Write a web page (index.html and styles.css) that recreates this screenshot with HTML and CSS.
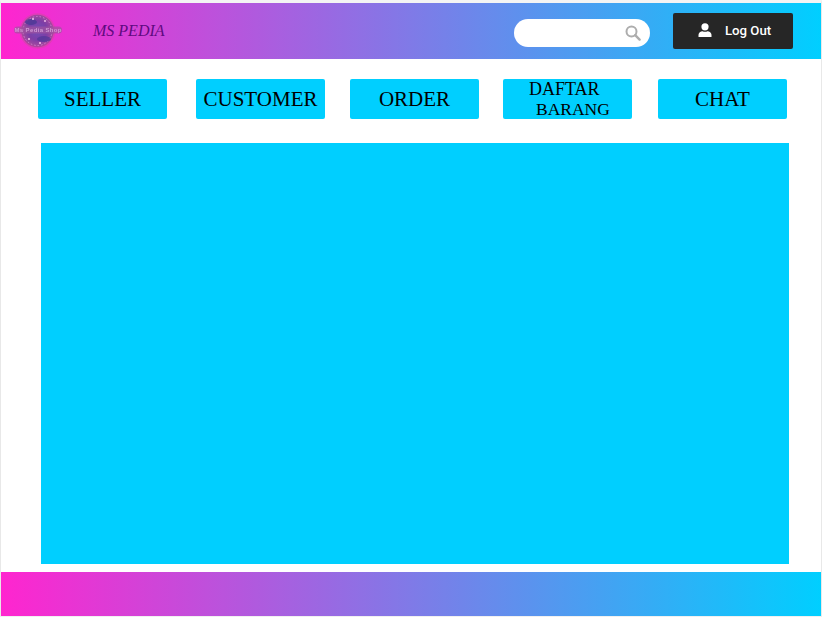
FILE: index.html
```html
<!DOCTYPE html>
<html lang="id">
<head>
<meta charset="utf-8">
<title>MS Pedia</title>
<link rel="stylesheet" href="styles.css">
</head>
<body>
<div class="page">
  <header class="topbar">
    <div class="brand">
      <svg class="logo" width="50" height="40" viewBox="0 0 50 40" aria-hidden="true">
        <defs>
          <radialGradient id="orb" cx="50%" cy="48%" r="52%">
            <stop offset="0" stop-color="#6f4fb8"/>
            <stop offset="0.55" stop-color="#7d3ea6"/>
            <stop offset="0.85" stop-color="#a0489f"/>
            <stop offset="1" stop-color="#c2409f"/>
          </radialGradient>
        </defs>
        <circle cx="24.500" cy="20" r="17" fill="url(#orb)" stroke="#e03cb8" stroke-width="1.500"/>
        <circle cx="24.500" cy="20" r="14.500" fill="none" stroke="#d98ad8" stroke-width="0.800" stroke-dasharray="1.500 2"/>
        <ellipse cx="18" cy="11" rx="6" ry="3" fill="#4a3a96" opacity="0.8"/>
        <ellipse cx="31" cy="28" rx="7" ry="3" fill="#54389a" opacity="0.8"/>
        <circle cx="20" cy="8" r="1" fill="#f6c4ec"/>
        <circle cx="32" cy="10" r="0.900" fill="#f6c4ec"/>
        <circle cx="16" cy="28" r="1" fill="#f6c4ec"/>
        <circle cx="27" cy="32" r="1" fill="#f6c4ec"/>
        <rect x="1" y="15.500" width="48" height="7" rx="3.500" fill="#a0529f" opacity="0.7"/>
        <text class="logo-text" x="25" y="21.200" text-anchor="middle" textLength="47">Ms Pedia Shop</text>
      </svg>
      <span class="brand-name">MS PEDIA</span>
    </div>
    <div class="actions">
      <div class="search">
        <svg width="16" height="16" viewBox="0 0 16 16" aria-hidden="true">
          <circle cx="6.500" cy="6.500" r="5" fill="none" stroke="#adadad" stroke-width="2"/>
          <path d="M10.200 10.200 14.600 14.600" stroke="#adadad" stroke-width="2.400" stroke-linecap="round"/>
        </svg>
      </div>
      <button class="logout" type="button">
        <svg class="user-icon" width="14" height="14" viewBox="0 0 14 14" aria-hidden="true">
          <circle cx="7" cy="3.800" r="3.600" fill="#fff"/>
          <path d="M.5 14v-2.200C.5 9.600 2.600 8.400 4.500 8.200c1.500.8 3.500.8 5 0 1.900.2 4 1.400 4 3.600V14z" fill="#fff"/>
        </svg>
        <span class="logout-label">Log Out</span>
      </button>
    </div>
  </header>

  <nav class="menu">
    <a class="tab">SELLER</a>
    <a class="tab tab-b">CUSTOMER</a>
    <a class="tab tab-c">ORDER</a>
    <a class="tab tab-d tab-small"><span class="line-one">DAFTAR</span><span class="line-two">BARANG</span></a>
    <a class="tab tab-e">CHAT</a>
  </nav>

  <main class="panel"></main>

  <footer class="bottombar"></footer>
</div>
</body>
</html>
```
FILE: styles.css
```css
* {
  box-sizing: border-box;
}

html,
body {
  margin: 0;
  height: 100%;
  background: #fff;
}

.page {
  width: 822px;
  height: 617px;
  display: flex;
  flex-direction: column;
  background: #fff;
  border-style: solid;
  border-color: #f4f4f4 #e8e8e8 #f0f0f0;
  border-width: 3px 1px 1px;
}

.topbar {
  height: 56px;
  flex: none;
  display: flex;
  align-items: center;
  justify-content: space-between;
  padding-right: 28px;
  background: linear-gradient(90deg, #ff25cf 0%, #00cfff 100%);
}

.brand {
  display: flex;
  align-items: center;
  padding-left: 12px;
}

.logo {
  display: block;
  filter: blur(0.5px);
}

.logo-text {
  font: 700 6px "Liberation Sans", sans-serif;
  fill: #cf9ad2;
}

.brand-name {
  margin-left: 30px;
  font: italic 16px "Liberation Serif", serif;
  color: #5f0a80;
}

.actions {
  display: flex;
  align-items: center;
  gap: 23px;
}

.search {
  width: 136px;
  height: 28px;
  padding-right: 9px;
  margin-top: 4px;
  display: flex;
  align-items: center;
  justify-content: flex-end;
  background: #fff;
  border-radius: 14px;
}

.logout {
  width: 120px;
  height: 36px;
  padding: 0 0 2px 25px;
  display: flex;
  align-items: center;
  gap: 13px;
  border: 0;
  border-radius: 2px;
  background: #262626;
  color: #fff;
  font: 500 13.2px Roboto, sans-serif;
}

.user-icon {
  margin-bottom: 1px;
}

.menu {
  display: flex;
  height: 84px;
  flex: none;
  padding: 20px 0 0 37px;
}

.tab {
  width: 129px;
  height: 40px;
  display: flex;
  align-items: center;
  justify-content: center;
  background: #00cfff;
  border-radius: 2px;
  color: #000;
  font: 21px/1 "Liberation Serif", serif;
}

.tab-b {
  margin-left: 29px;
}

.tab-c {
  margin-left: 25px;
}

.tab-d {
  margin-left: 24px;
}

.tab-e {
  margin-left: 26px;
}

.tab-small {
  display: block;
  font-size: 17.5px;
  line-height: 20px;
}

.line-one,
.line-two {
  display: block;
}

.line-one {
  padding-left: 26px;
  font-size: 18px;
}

.line-two {
  padding-left: 33px;
}

.panel {
  flex: 1;
  margin: 0 32px 8px 40px;
  background: #00cfff;
}

.bottombar {
  height: 44px;
  flex: none;
  background: linear-gradient(90deg, #ff25cf 0%, #00cfff 100%);
}
```
